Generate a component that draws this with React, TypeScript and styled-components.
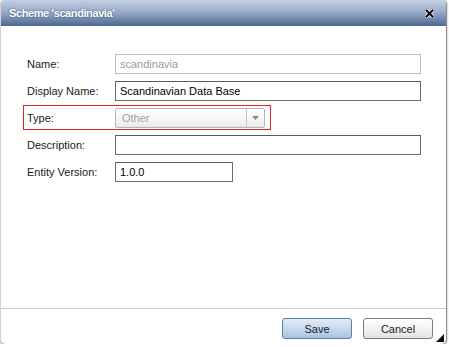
import styled, { createGlobalStyle } from 'styled-components';

const GlobalStyle = createGlobalStyle`
  html, body {
    margin: 0;
    padding: 0;
    background: #ffffff;
  }
  body {
    font-family: "Liberation Sans", Arial, sans-serif;
    font-size: 11px;
  }
`;

const fields = [
  { label: 'Name:', value: 'scandinavia', kind: 'readonly' },
  { label: 'Display Name:', value: 'Scandinavian Data Base', kind: 'text' },
  { label: 'Type:', value: 'Other', kind: 'combo' },
  { label: 'Description:', value: '', kind: 'text' },
  { label: 'Entity Version:', value: '1.0.0', kind: 'short' },
];

export default function App() {
  return (
    <>
      <GlobalStyle />
      <Dialog>
        <TitleBar>
          <TitleText>Scheme 'scandinavia'</TitleText>
          <CloseButton>
            <svg width="9" height="9" viewBox="0 0 9 9">
              <path d="M1.5 1.5 L7.5 7.5 M7.5 1.5 L1.5 7.5" stroke="#fff" strokeWidth="3.6" strokeLinecap="round" />
              <path d="M1.5 1.5 L7.5 7.5 M7.5 1.5 L1.5 7.5" stroke="#000" strokeWidth="2" strokeLinecap="square" />
            </svg>
          </CloseButton>
        </TitleBar>
        <Body>
          {fields.map(f => (
            <Row key={f.label}>
              {f.kind === 'combo' && <Highlight />}
              <Label>{f.label}</Label>
              {f.kind === 'combo' ? (
                <Combo>
                  <ComboText>{f.value}</ComboText>
                  <ComboArrow>
                    <svg width="7" height="4" viewBox="0 0 7 4">
                      <path d="M0 0 L7 0 L3.5 4 Z" fill="#8a8a8a" />
                    </svg>
                  </ComboArrow>
                </Combo>
              ) : (
                <Field $kind={f.kind}>{f.value}</Field>
              )}
            </Row>
          ))}
        </Body>
        <Footer>
          <Button $primary>Save</Button>
          <Button>Cancel</Button>
          <Grip />
        </Footer>
      </Dialog>
    </>
  );
}

const Dialog = styled.div`
  display: flex;
  flex-direction: column;
  width: 447px;
  height: 344px;
  box-sizing: border-box;
  background: #fff;
  border-right: 1px solid #8f8f8f;
  border-left: 1px solid #d4d4d4;
  border-radius: 4px 4px 5px 5px;
  box-shadow: 0 1px 2px rgba(0, 0, 0, 0.45);
  overflow: hidden;
`;

const TitleBar = styled.div`
  display: flex;
  align-items: center;
  justify-content: space-between;
  height: 26px;
  padding: 0 12px 0 8px;
  background: linear-gradient(to bottom, #c3cfe1 0%, #9aadc9 45%, #4c6892 100%);
`;

const TitleText = styled.span`
  color: #fff;
  font-weight: bold;
  font-size: 11px;
  letter-spacing: -0.4px;
  text-shadow: 0 0 2px rgba(30, 50, 90, 0.8);
`;

const CloseButton = styled.span`
  display: flex;
  width: 9px;
  height: 9px;
`;

const Body = styled.div`
  flex: 1;
  display: flex;
  flex-direction: column;
  gap: 7px;
  padding: 28px 25px 0 26px;
`;

const Row = styled.div`
  position: relative;
  display: flex;
  align-items: center;
  height: 20px;
`;

const Highlight = styled.span`
  position: absolute;
  left: -4px;
  top: -3px;
  width: 246px;
  height: 23px;
  border: 1px solid #e8202a;
  pointer-events: none;
`;

const Label = styled.span`
  width: 88px;
  flex-shrink: 0;
  color: #1a1a1a;
`;

const Field = styled.div<{ $kind: string }>`
  box-sizing: border-box;
  height: 20px;
  width: ${p => (p.$kind === 'short' ? '118px' : '307px')};
  padding: 0 4px;
  display: flex;
  align-items: center;
  border: 1px solid ${p => (p.$kind === 'readonly' ? '#bdbdbd' : '#6b6b6b')};
  border-top-color: ${p => (p.$kind === 'readonly' ? '#c4c4c4' : '#5a5a5a')};
  color: ${p => (p.$kind === 'readonly' ? '#9a9a9a' : '#000')};
  background: #fff;
`;

const Combo = styled.div`
  box-sizing: border-box;
  height: 20px;
  width: 150px;
  display: flex;
  border: 1px solid #b5b5b5;
  border-radius: 2px;
  background: linear-gradient(to bottom, #ffffff 0%, #f7f7f7 50%, #e9e9e9 100%);
`;

const ComboText = styled.span`
  flex: 1;
  display: flex;
  align-items: center;
  padding-left: 6px;
  color: #a0a0a0;
`;

const ComboArrow = styled.span`
  width: 17px;
  display: flex;
  align-items: center;
  justify-content: center;
  border-left: 1px solid #c4c4c4;
`;

const Footer = styled.div`
  position: relative;
  display: flex;
  justify-content: flex-end;
  gap: 11px;
  height: 36px;
  padding: 9px 13px 0 0;
  box-sizing: border-box;
  border-top: 1px solid #c9c9c9;
`;

const Button = styled.button<{ $primary?: boolean }>`
  width: 70px;
  height: 21px;
  padding: 0;
  font-family: "Liberation Sans", Arial, sans-serif;
  font-size: 11px;
  color: #1a1a1a;
  border-radius: 3px;
  border: 1px solid ${p => (p.$primary ? '#5c7eaa' : '#7a7a7a')};
  background: ${p =>
    p.$primary
      ? 'linear-gradient(to bottom, #e3ecf7 0%, #c9daef 50%, #a7c1e2 100%)'
      : 'linear-gradient(to bottom, #ffffff 0%, #f3f3f3 50%, #e2e2e2 100%)'};
`;

const Grip = styled.span`
  position: absolute;
  right: 2px;
  bottom: 2px;
  width: 0;
  height: 0;
  border-left: 8px solid transparent;
  border-bottom: 8px solid #111;
`;
